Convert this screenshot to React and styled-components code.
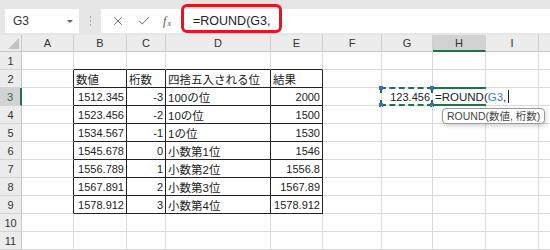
import React from "react";
import styled, { createGlobalStyle } from "styled-components";
import { X, Check } from "lucide-react";

const GlobalStyle = createGlobalStyle`
  body {
    margin: 0;
    background: #ffffff;
    font-family: "Liberation Sans", "Noto Sans CJK JP", sans-serif;
  }
`;

const GREEN = "#217346";
const COLS = ["A", "B", "C", "D", "E", "F", "G", "H", "I", "J"];
const WIDTHS = [52, 53, 39, 105, 52, 59, 51, 53, 53, 40];

const TABLE = {
  2: ["数値", "桁数", "四捨五入される位", "結果"],
  3: ["1512.345", "-3", "100の位", "2000"],
  4: ["1523.456", "-2", "10の位", "1500"],
  5: ["1534.567", "-1", "1の位", "1530"],
  6: ["1545.678", "0", "小数第1位", "1546"],
  7: ["1556.789", "1", "小数第2位", "1556.8"],
  8: ["1567.891", "2", "小数第3位", "1567.89"],
  9: ["1578.912", "3", "小数第4位", "1578.912"],
};

export default function App() {
  const rows = [];
  for (let r = 1; r <= 11; r++) {
    rows.push(
      <RowHead key={`rh${r}`} $active={r === 3}>
        {r}
      </RowHead>
    );
    COLS.forEach((col, c) => {
      const inTable = r >= 2 && r <= 9 && c >= 1 && c <= 4;
      const darkR = inTable || (c === 0 && r >= 2 && r <= 9);
      const darkB = inTable || (r === 1 && c >= 1 && c <= 4);
      let content = null;
      let align = "left";
      let jp = false;
      if (inTable) {
        content = TABLE[r][c - 1];
        jp = r === 2 || c === 3;
        align = jp ? "left" : "right";
      }
      if (r === 3 && col === "G") {
        rows.push(
          <Cell key={`${col}${r}`} $align="right">
            123.456
            <Marquee>
              <Handle $x="left" $y="top" />
              <Handle $x="right" $y="top" />
              <Handle $x="left" $y="bottom" />
              <Handle $x="right" $y="bottom" />
            </Marquee>
          </Cell>
        );
        return;
      }
      if (r === 3 && col === "H") {
        rows.push(
          <Cell key={`${col}${r}`} $align="left">
            <ActiveFrame />
            <EditText>
              =ROUND(<Ref>G3</Ref>,<Caret />
            </EditText>
            <Tip>ROUND(数値, 桁数)</Tip>
          </Cell>
        );
        return;
      }
      rows.push(
        <Cell
          key={`${col}${r}`}
          $align={align}
          $darkR={darkR}
          $darkB={darkB}
          $jp={jp}
        >
          {content}
        </Cell>
      );
    });
  }

  return (
    <>
      <GlobalStyle />
      <Page>
        <TopBar>
          <NameBox>
            G3
            <Caret2 />
          </NameBox>
          <Grip>
            <i />
            <i />
            <i />
          </Grip>
          <FormulaBox>
            <Tools>
              <X size={14} strokeWidth={1.4} color="#555" />
              <Check size={14} strokeWidth={1.6} color="#555" />
              <Fx>
                f<small>x</small>
              </Fx>
            </Tools>
            <Input>
              =ROUND(G3,
              <Highlight />
            </Input>
          </FormulaBox>
        </TopBar>
        <Sheet>
          <Corner />
          {COLS.map((c) => (
            <ColHead key={c} $active={c === "H"}>
              {c === "J" ? null : c}
            </ColHead>
          ))}
          {rows}
        </Sheet>
      </Page>
    </>
  );
}

const Page = styled.div`
  width: 550px;
  height: 250px;
  overflow: hidden;
  display: flex;
  flex-direction: column;
`;

const TopBar = styled.div`
  height: 39px;
  background: #e6e6e6;
  display: flex;
  align-items: flex-start;
  padding: 9px 0 0 5px;
  box-sizing: border-box;
`;

const NameBox = styled.div`
  width: 74px;
  height: 24px;
  background: #fff;
  display: flex;
  align-items: center;
  justify-content: space-between;
  padding: 0 6px 0 8px;
  box-sizing: border-box;
  font-size: 12px;
  color: #333;
`;

const Caret2 = styled.span`
  width: 0;
  height: 0;
  border-left: 3px solid transparent;
  border-right: 3px solid transparent;
  border-top: 3px solid #666;
`;

const Grip = styled.div`
  width: 22px;
  height: 24px;
  display: flex;
  flex-direction: column;
  align-items: center;
  justify-content: center;
  gap: 2px;
  i {
    width: 1px;
    height: 2px;
    background: #aaa;
  }
`;

const FormulaBox = styled.div`
  flex: 1;
  height: 24px;
  background: #fff;
  display: flex;
  align-items: center;
`;

const Tools = styled.div`
  width: 80px;
  display: flex;
  align-items: center;
  justify-content: space-around;
  padding: 0 4px;
  box-sizing: border-box;
`;

const Fx = styled.span`
  font-family: "Liberation Serif", serif;
  font-style: italic;
  font-size: 12px;
  color: #555;
  small {
    font-size: 8px;
    position: relative;
    top: 1px;
    margin-left: 1px;
  }
`;

const Input = styled.div`
  position: relative;
  flex: 1;
  height: 24px;
  display: flex;
  align-items: center;
  padding-left: 12px;
  font-size: 12.5px;
  color: #222;
`;

const Highlight = styled.div`
  position: absolute;
  left: 0;
  top: -5px;
  width: 101px;
  height: 29px;
  border: 3px solid #e8141b;
  border-radius: 6px;
  box-sizing: border-box;
`;

const Sheet = styled.div`
  display: grid;
  grid-template-columns: 22px ${WIDTHS.map((w) => `${w}px`).join(" ")};
  grid-template-rows: 17px repeat(11, 18px);
  font-size: 11px;
  color: #222;
`;

const Corner = styled.div`
  background: #ececec;
  border-right: 1px solid #c8c8c8;
  border-bottom: 1px solid #c8c8c8;
  position: relative;
  &::after {
    content: "";
    position: absolute;
    right: 2px;
    bottom: 2px;
    border-left: 11px solid transparent;
    border-bottom: 11px solid #c3c3c3;
  }
`;

const ColHead = styled.div`
  background: ${(p) => (p.$active ? "#d2d2d2" : "#ececec")};
  border-right: 1px solid #cfcfcf;
  border-bottom: ${(p) => (p.$active ? `2px solid ${GREEN}` : "1px solid #c8c8c8")};
  display: flex;
  align-items: center;
  justify-content: center;
  font-size: 11px;
  color: #333;
  box-sizing: border-box;
`;

const RowHead = styled.div`
  background: ${(p) => (p.$active ? "#d2d2d2" : "#ececec")};
  border-right: ${(p) => (p.$active ? `2px solid ${GREEN}` : "1px solid #c8c8c8")};
  border-bottom: 1px solid #d4d4d4;
  display: flex;
  align-items: center;
  justify-content: center;
  font-size: 11px;
  color: ${(p) => (p.$active ? GREEN : "#333")};
  box-sizing: border-box;
`;

const Cell = styled.div`
  position: relative;
  border-right: 1px solid ${(p) => (p.$darkR ? "#222" : "#dadada")};
  border-bottom: 1px solid ${(p) => (p.$darkB ? "#222" : "#dadada")};
  display: flex;
  align-items: center;
  justify-content: ${(p) => (p.$align === "right" ? "flex-end" : "flex-start")};
  padding: 0 2px;
  box-sizing: border-box;
  font-size: ${(p) => (p.$jp ? "11.5px" : "11px")};
  white-space: nowrap;
  overflow: visible;
`;

const Marquee = styled.div`
  position: absolute;
  inset: -1px -1px -1px -2px;
  border: 2px dashed ${GREEN};
`;

const Handle = styled.span`
  position: absolute;
  width: 4px;
  height: 4px;
  background: #2f6fd0;
  ${(p) => p.$x}: -3px;
  ${(p) => p.$y}: -3px;
`;

const ActiveFrame = styled.div`
  position: absolute;
  inset: -1px -1px -1px 0;
  border-top: 2px solid ${GREEN};
  border-bottom: 2px solid ${GREEN};
`;

const EditText = styled.span`
  position: relative;
  display: flex;
  align-items: center;
  z-index: 2;
  background: #fff;
  padding-right: 2px;
  font-size: 11.5px;
  color: #222;
`;

const Ref = styled.span`
  color: #3a7bd5;
`;

const Caret = styled.span`
  display: inline-block;
  width: 1px;
  height: 13px;
  background: #222;
  margin-left: 2px;
`;

const Tip = styled.div`
  position: absolute;
  left: 9px;
  top: 20px;
  z-index: 3;
  padding: 0 4px;
  height: 16px;
  line-height: 14px;
  background: #fff;
  border: 1px solid #9a9a9a;
  border-radius: 4px;
  box-shadow: 1px 2px 4px rgba(0, 0, 0, 0.18);
  font-size: 10.5px;
  color: #444;
  box-sizing: border-box;
`;
